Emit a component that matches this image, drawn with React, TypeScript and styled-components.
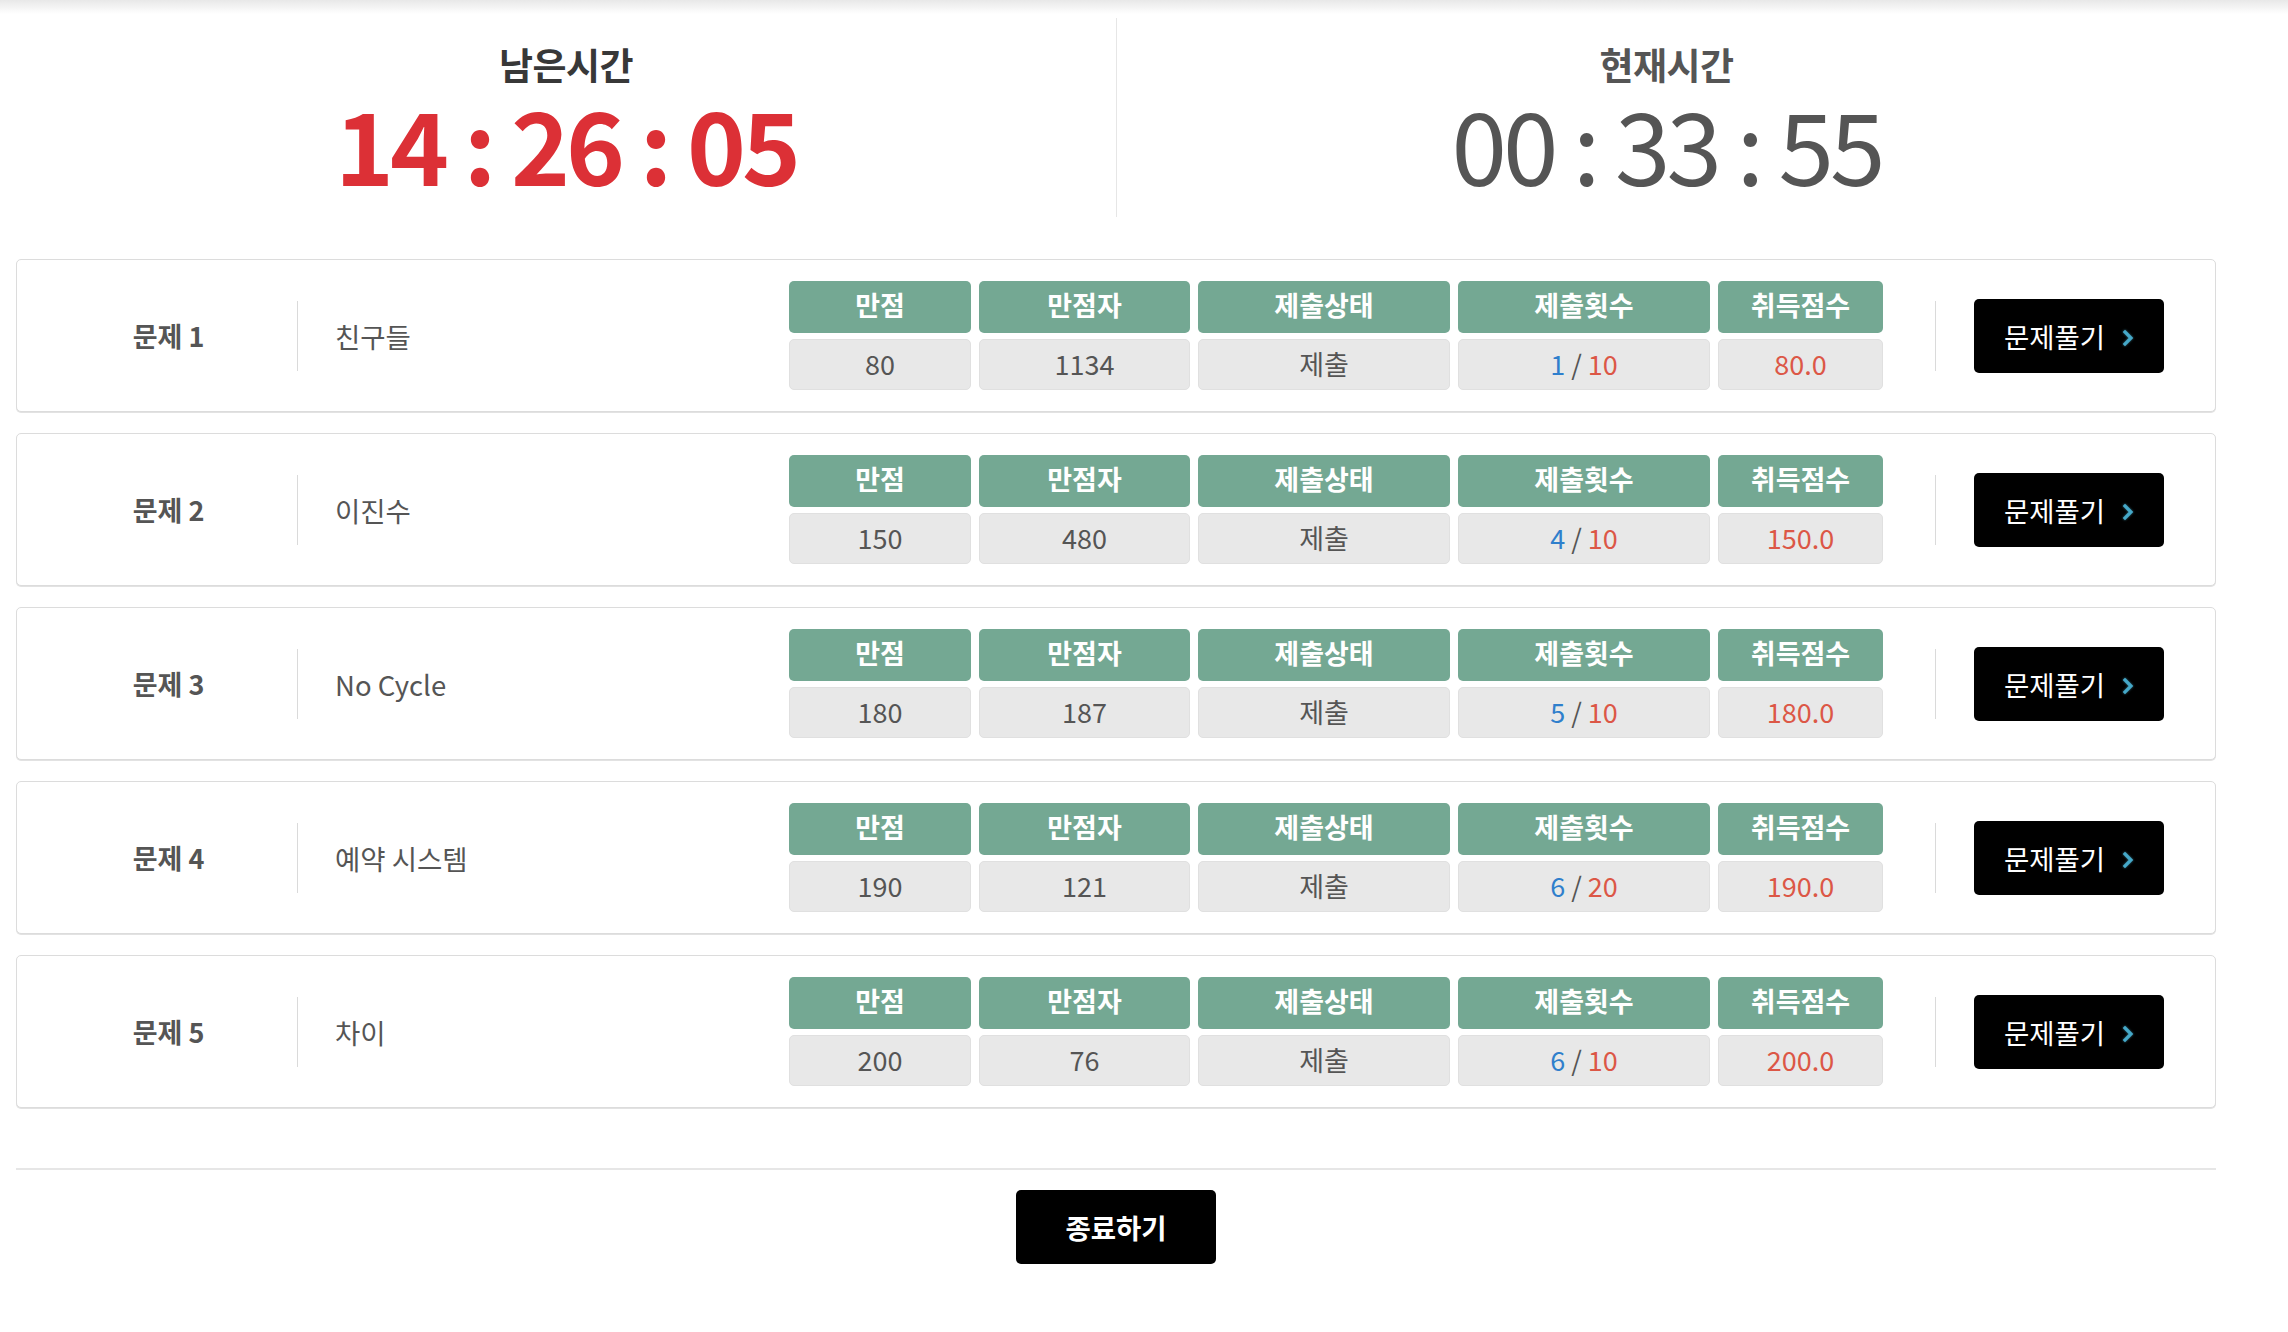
import React from 'react';
import styled, { createGlobalStyle } from 'styled-components';

const GlobalStyle = createGlobalStyle`
  html, body { margin: 0; padding: 0; background: #fff; }
  body { font-family: "Noto Sans CJK KR", "Noto Sans", sans-serif; color: #555; }
  * { box-sizing: border-box; }
`;

const TopShade = styled.div`
  height: 14px;
  background: linear-gradient(#e8e8e8, #ffffff);
`;

const Page = styled.main`
  width: 2200px;
  margin: 4px 0 0 16px;
`;

const TimerRow = styled.section`
  display: grid;
  grid-template-columns: 1fr 1fr;
  height: 199px;
`;

const TimerBox = styled.div<{ $divided?: boolean }>`
  display: flex;
  flex-direction: column;
  align-items: center;
  padding-top: 22px;
  border-left: ${(p) => (p.$divided ? '1px solid #e6e6e6' : 'none')};
`;

const TimerLabel = styled.h2<{ $dark?: boolean }>`
  margin: 0;
  font-size: 37px;
  line-height: 48px;
  font-weight: 700;
  letter-spacing: -0.5px;
  color: ${(p) => (p.$dark ? '#383838' : '#555')};
`;

const TimerValue = styled.div<{ $red?: boolean }>`
  margin-top: 5px;
  font-size: 100px;
  line-height: 100px;
  font-weight: ${(p) => (p.$red ? 700 : 400)};
  letter-spacing: -4px;
  color: ${(p) => (p.$red ? '#dc3036' : '#555')};
  white-space: pre;
`;

const CardList = styled.div`
  margin-top: 42px;
  display: flex;
  flex-direction: column;
  gap: 21px;
`;

const Card = styled.article`
  display: flex;
  align-items: center;
  height: 153px;
  border: 1px solid #dcdcdc;
  border-radius: 5px;
  box-shadow: 0 1px 0 #e2e2e2;
  padding-right: 51px;
  background: #fff;
`;

const ProblemNo = styled.div`
  width: 280px;
  padding-left: 23px;
  text-align: center;
  font-size: 27px;
  font-weight: 700;
  color: #555;
`;

const VDivider = styled.div<{ $ml?: number; $mr?: number }>`
  width: 1px;
  height: 70px;
  background: #dadada;
  margin-left: ${(p) => p.$ml ?? 0}px;
  margin-right: ${(p) => p.$mr ?? 0}px;
  flex-shrink: 0;
`;

const ProblemName = styled.div`
  flex: 1;
  padding-left: 37px;
  font-size: 27.5px;
  color: #555;
`;

const Stats = styled.div`
  display: grid;
  grid-template-columns: 182px 211px 252px 252px 165px;
  grid-template-rows: 52px 51px;
  column-gap: 8px;
  row-gap: 6px;
  flex-shrink: 0;
`;

const HeadCell = styled.div`
  display: flex;
  align-items: center;
  justify-content: center;
  padding-bottom: 5px;
  background: #74a893;
  border-radius: 5px;
  color: #fff;
  font-size: 27px;
  font-weight: 700;
`;

const ValueCell = styled.div<{ $tone?: 'red' }>`
  display: flex;
  align-items: center;
  justify-content: center;
  padding-bottom: 2px;
  background: #e8e8e8;
  border: 1px solid #e0e0e0;
  border-radius: 5px;
  font-size: 27px;
  color: ${(p) => (p.$tone === 'red' ? '#dc5746' : '#555')};
  white-space: pre;
`;

const Tone = styled.span<{ $c: string }>`
  color: ${(p) => p.$c};
`;

const SolveButton = styled.button`
  display: flex;
  align-items: center;
  justify-content: center;
  gap: 17px;
  width: 190px;
  height: 74px;
  flex-shrink: 0;
  background: #000;
  color: #fff;
  border: none;
  border-radius: 5px;
  font-family: inherit;
  font-size: 27.5px;
  cursor: pointer;
`;

const Arrow = styled.svg`
  width: 12px;
  height: 18px;
  margin-top: 4px;
  filter: drop-shadow(0 0 1px rgba(80, 180, 210, 0.6));
`;

const Footer = styled.footer`
  margin-top: 60px;
  border-top: 2px solid #e6e6e6;
  display: flex;
  justify-content: center;
  padding-top: 20px;
`;

const EndButton = styled.button`
  width: 200px;
  height: 74px;
  padding-bottom: 2px;
  background: #000;
  color: #fff;
  border: none;
  border-radius: 5px;
  font-family: inherit;
  font-size: 27.5px;
  font-weight: 700;
  cursor: pointer;
`;

type Problem = {
  no: number;
  name: string;
  full: number;
  fullCount: number;
  tries: number;
  maxTries: number;
};

const problems: Problem[] = [
  { no: 1, name: '친구들', full: 80, fullCount: 1134, tries: 1, maxTries: 10 },
  { no: 2, name: '이진수', full: 150, fullCount: 480, tries: 4, maxTries: 10 },
  { no: 3, name: 'No Cycle', full: 180, fullCount: 187, tries: 5, maxTries: 10 },
  { no: 4, name: '예약 시스템', full: 190, fullCount: 121, tries: 6, maxTries: 20 },
  { no: 5, name: '차이', full: 200, fullCount: 76, tries: 6, maxTries: 10 },
];

const heads = ['만점', '만점자', '제출상태', '제출횟수', '취득점수'];

export default function App() {
  return (
    <>
      <GlobalStyle />
      <TopShade />
      <Page>
        <TimerRow>
          <TimerBox>
            <TimerLabel $dark>남은시간</TimerLabel>
            <TimerValue $red>14 : 26 : 05</TimerValue>
          </TimerBox>
          <TimerBox $divided>
            <TimerLabel>현재시간</TimerLabel>
            <TimerValue>00 : 33 : 55</TimerValue>
          </TimerBox>
        </TimerRow>

        <CardList>
          {problems.map((p) => (
            <Card key={p.no}>
              <ProblemNo>문제 {p.no}</ProblemNo>
              <VDivider />
              <ProblemName>{p.name}</ProblemName>
              <Stats>
                {heads.map((h) => (
                  <HeadCell key={h}>{h}</HeadCell>
                ))}
                <ValueCell>{p.full}</ValueCell>
                <ValueCell>{p.fullCount}</ValueCell>
                <ValueCell>제출</ValueCell>
                <ValueCell>
                  <Tone $c="#2f7fcc">{p.tries}</Tone>
                  {' / '}
                  <Tone $c="#dc5746">{p.maxTries}</Tone>
                </ValueCell>
                <ValueCell $tone="red">{p.full.toFixed(1)}</ValueCell>
              </Stats>
              <VDivider $ml={52} $mr={38} />
              <SolveButton>
                문제풀기
                <Arrow viewBox="0 0 12 18">
                  <path d="M3 3 L9 9 L3 15" fill="none" stroke="#45a8c8" strokeWidth="3.2" strokeLinecap="square" />
                </Arrow>
              </SolveButton>
            </Card>
          ))}
        </CardList>

        <Footer>
          <EndButton>종료하기</EndButton>
        </Footer>
      </Page>
    </>
  );
}
